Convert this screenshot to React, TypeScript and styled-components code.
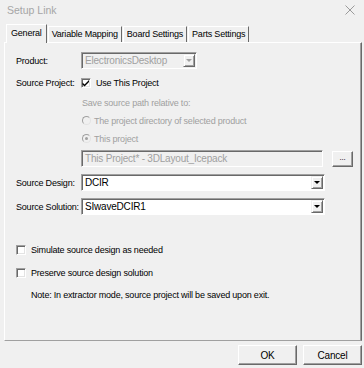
import styled, {createGlobalStyle} from 'styled-components'

const Global = createGlobalStyle`
    html, body { margin: 0; padding: 0; background: #f0f0f0; }
    body {
        font-family: "Liberation Sans", Arial, sans-serif;
        font-size: 9px;
        letter-spacing: -0.2px;
        color: #000;
        white-space: nowrap;
    }
`

const Window = styled.div`
    width: 364px;
    height: 368px;
    background: #f0f0f0;
    display: flex;
    flex-direction: column;
    overflow: hidden;
`

const TitleBar = styled.div`
    height: 20px;
    display: flex;
    align-items: center;
    justify-content: space-between;
    padding: 0 9px 0 7px;
    color: #a6a6a6;
    font-size: 10.5px;
    letter-spacing: 0;
`

const TabList = styled.div`
    display: flex;
    align-items: flex-end;
    padding-left: 6px;
    margin-top: 4px;
    height: 18px;
`

const Tab = styled.div<{$active?: boolean}>`
    position: relative;
    box-sizing: border-box;
    padding: 0 ${p => p.$active ? 4 : 3}px;
    height: ${p => p.$active ? 19 : 16}px;
    line-height: ${p => p.$active ? 16 : 15}px;
    border-left: 1px solid #fff;
    border-top: 1px solid #fff;
    border-right: 1px solid #696969;
    margin-left: ${p => p.$active ? 0 : 1}px;
    margin-bottom: ${p => p.$active ? -1 : 0}px;
    z-index: ${p => p.$active ? 2 : 1};
    background: #f0f0f0;
`

const Panel = styled.div`
    margin: 0 2px 0 4px;
    height: 299px;
    box-sizing: border-box;
    border-top: 1px solid #fff;
    border-left: 1px solid #fff;
    border-right: 1px solid #696969;
    border-bottom: 1px solid #a0a0a0;
    box-shadow: inset -1px 0 #a0a0a0;
    padding: 9px 0 0 11px;
    display: flex;
    flex-direction: column;
`

const Row = styled.div<{$mt?: number; $h?: number; $indent?: number}>`
    display: flex;
    align-items: center;
    height: ${p => p.$h ?? 13}px;
    margin-top: ${p => p.$mt ?? 0}px;
    padding-left: ${p => p.$indent ?? 0}px;
`

const Label = styled.div`
    width: 65px;
`

const Grey = styled.span`
    color: #a0a0a0;
`

const Combo = styled.div<{$w: number; $disabled?: boolean}>`
    width: ${p => p.$w}px;
    height: 17px;
    box-sizing: border-box;
    border-top: 1px solid #a0a0a0;
    border-left: 1px solid #a0a0a0;
    border-right: 1px solid #fff;
    border-bottom: 1px solid #fff;
    box-shadow: inset 1px 1px #696969;
    background: ${p => p.$disabled ? '#f0f0f0' : '#fff'};
    color: ${p => p.$disabled ? '#a0a0a0' : '#000'};
    display: flex;
    align-items: center;
    padding-left: 3px;
    justify-content: space-between;
    font-size: 10px;
`

const Arrow = styled.div<{$disabled?: boolean}>`
    width: 12px;
    height: 13px;
    margin-right: 1px;
    box-sizing: border-box;
    background: #f0f0f0;
    border-top: 1px solid #f0f0f0;
    border-left: 1px solid #f0f0f0;
    border-right: 1px solid #696969;
    border-bottom: 1px solid #696969;
    box-shadow: inset 1px 1px #fff, inset -1px -1px #a0a0a0;
    display: flex;
    align-items: center;
    justify-content: center;
    &::after {
        content: '';
        border-left: 3px solid transparent;
        border-right: 3px solid transparent;
        border-top: 3px solid ${p => p.$disabled ? '#a0a0a0' : '#000'};
    }
`

const Check = styled.div`
    width: 10px;
    height: 10px;
    box-sizing: border-box;
    border-top: 1px solid #a0a0a0;
    border-left: 1px solid #a0a0a0;
    border-right: 1px solid #fff;
    border-bottom: 1px solid #fff;
    box-shadow: inset 1px 1px #696969, inset -1px -1px #e3e3e3;
    background: #fff;
    margin-right: 5px;
    display: flex;
    align-items: center;
    justify-content: center;
`

const Radio = styled.div<{$checked?: boolean}>`
    width: 7px;
    height: 7px;
    border-radius: 50%;
    border: 1px solid #a0a0a0;
    border-right-color: #e3e3e3;
    border-bottom-color: #e3e3e3;
    background: #f0f0f0;
    margin-right: 3px;
    display: flex;
    align-items: center;
    justify-content: center;
    &::after {
        content: '';
        width: 3px;
        height: 3px;
        border-radius: 50%;
        background: ${p => p.$checked ? '#a0a0a0' : 'transparent'};
    }
`

const Field = styled.div`
    width: 242px;
    height: 17px;
    box-sizing: border-box;
    border-top: 1px solid #a0a0a0;
    border-left: 1px solid #a0a0a0;
    border-right: 1px solid #fff;
    border-bottom: 1px solid #fff;
    box-shadow: inset 1px 1px #696969;
    color: #a0a0a0;
    padding-left: 3px;
    display: flex;
    align-items: center;
    font-size: 10px;
`

const Button = styled.div<{$w: number; $h: number}>`
    width: ${p => p.$w}px;
    height: ${p => p.$h}px;
    box-sizing: border-box;
    background: #f0f0f0;
    border-top: 1px solid #fff;
    border-left: 1px solid #fff;
    border-right: 1px solid #696969;
    border-bottom: 1px solid #696969;
    box-shadow: inset -1px -1px #a0a0a0;
    display: flex;
    align-items: center;
    justify-content: center;
    font-size: 10px;
`

const Browse = styled(Button)`
    margin-left: 9px;
    font-size: 8px;
    padding-bottom: 3px;
`

const Footer = styled.div`
    display: flex;
    justify-content: flex-end;
    gap: 6px;
    padding: 4px 2px 0 0;
`

const CheckMark = () => (
    <svg width="8" height="8" viewBox="0 0 8 8">
        <path d="M0.5 3.5 L2.5 5.5 L7 1 L7 3 L2.5 7.5 L0.5 5.5 Z" fill="#000" />
    </svg>
)

const CloseIcon = () => (
    <svg width="10" height="10" viewBox="0 0 10 10">
        <path d="M0.5 0.5 L9.5 9.5 M9.5 0.5 L0.5 9.5" stroke="#9a9a9a" strokeWidth="1" />
    </svg>
)

const App = () => (
    <Window>
        <Global />
        <TitleBar>
            <span>Setup Link</span>
            <CloseIcon />
        </TitleBar>
        <TabList>
            <Tab $active>General</Tab>
            <Tab>Variable Mapping</Tab>
            <Tab>Board Settings</Tab>
            <Tab>Parts Settings</Tab>
        </TabList>
        <Panel>
            <Row $h={17}>
                <Label>Product:</Label>
                <Combo $w={116} $disabled>
                    <span>ElectronicsDesktop</span>
                    <Arrow $disabled />
                </Combo>
            </Row>
            <Row $mt={7}>
                <Label>Source Project:</Label>
                <Check><CheckMark /></Check>
                <span>Use This Project</span>
            </Row>
            <Row $mt={7} $indent={66}>
                <Grey>Save source path relative to:</Grey>
            </Row>
            <Row $mt={5} $indent={66}>
                <Radio />
                <Grey>The project directory of selected product</Grey>
            </Row>
            <Row $mt={5} $indent={66}>
                <Radio $checked />
                <Grey>This project</Grey>
            </Row>
            <Row $mt={5} $h={17} $indent={65}>
                <Field>This Project* - 3DLayout_Icepack</Field>
                <Browse $w={21} $h={16}>...</Browse>
            </Row>
            <Row $mt={7} $h={17}>
                <Label>Source Design:</Label>
                <Combo $w={244}>
                    <span>DCIR</span>
                    <Arrow />
                </Combo>
            </Row>
            <Row $mt={7} $h={17}>
                <Label>Source Solution:</Label>
                <Combo $w={244}>
                    <span>SIwaveDCIR1</span>
                    <Arrow />
                </Combo>
            </Row>
            <Row $mt={28}>
                <Check />
                <span>Simulate source design as needed</span>
            </Row>
            <Row $mt={10}>
                <Check />
                <span>Preserve source design solution</span>
            </Row>
            <Row $mt={9} $indent={15}>
                Note: In extractor mode, source project will be saved upon exit.
            </Row>
        </Panel>
        <Footer>
            <Button $w={59} $h={20}>OK</Button>
            <Button $w={59} $h={20}>Cancel</Button>
        </Footer>
    </Window>
)

export default App
